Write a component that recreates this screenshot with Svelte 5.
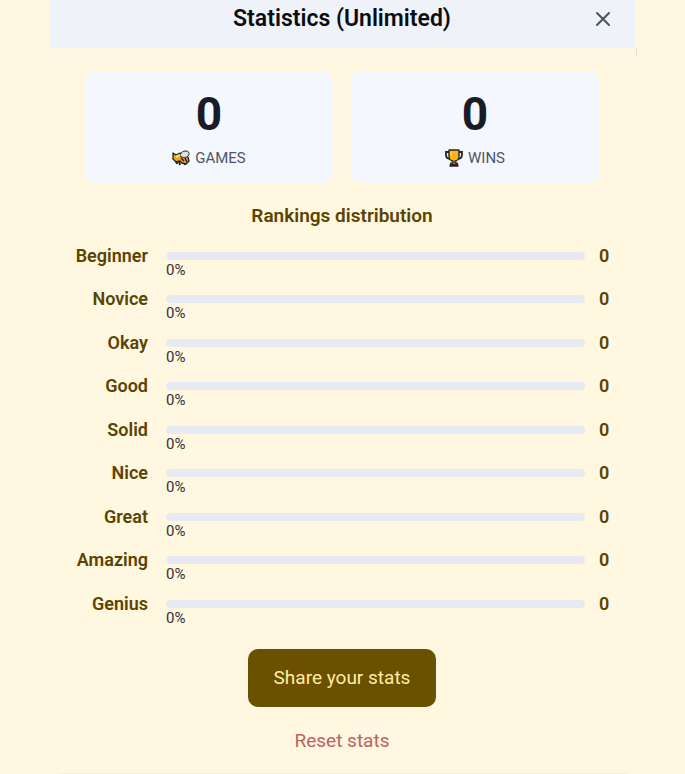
<script lang="ts">
	let games = $state(0);
	let wins = $state(0);
	let open = $state(true);

	const names = ['Beginner', 'Novice', 'Okay', 'Good', 'Solid', 'Nice', 'Great', 'Amazing', 'Genius'];
	let rankings = $state(names.map((name) => ({ name, count: 0 })));

	const total = $derived(rankings.reduce((sum, r) => sum + r.count, 0));

	function percent(count: number) {
		return total === 0 ? 0 : Math.round((count / total) * 100);
	}

	function reset() {
		games = 0;
		wins = 0;
		rankings = names.map((name) => ({ name, count: 0 }));
	}

	function share() {
		navigator.clipboard?.writeText(`Games: ${games}, wins: ${wins}`);
	}
</script>

{#if open}
	<main class="dialog">
		<header>
			<h1>Statistics (Unlimited)</h1>
			<button type="button" class="close" aria-label="Close" onclick={() => (open = false)}>
				<svg viewBox="0 0 16 16" width="16" height="16" aria-hidden="true">
					<path d="M2 2l12 12M14 2L2 14" />
				</svg>
			</button>
		</header>

		<div class="content">
			<section class="cards">
				<div class="card">
					<strong>{games}</strong>
					<span class="caption">
						<svg viewBox="0 0 18 16" width="18" height="16" aria-hidden="true">
							<path d="M4 9l1 5M7 11l1 4M12 11l1 4" fill="none" stroke="#222" stroke-width="2" />
							<path d="M1 3l3 2 4-2 4 2 4 2 1 4-3 3-4-1-2-2-4 1-3-3z" fill="#eda91c" stroke="#222" stroke-width="1.3" stroke-linejoin="round" />
							<path d="M8 6c0-3 3-5 6-5 3 0 4 3 2 5-2 2-5 2-8 0z" fill="#dde2e2" stroke="#222" stroke-width="1" />
							<path d="M9 8l3 3M13 8l2 4" fill="none" stroke="#222" stroke-width="1.5" />
							<path d="M4 7l4-2" stroke="#ffdc68" stroke-width="2" />
						</svg>
						GAMES
					</span>
				</div>
				<div class="card">
					<strong>{wins}</strong>
					<span class="caption">
						<svg viewBox="0 0 18 18" width="18" height="18" aria-hidden="true">
							<path d="M5 3H1v3c0 3 2 4 5 4M13 3h4v3c0 3-2 4-5 4" fill="none" stroke="#252525" stroke-width="1.8" />
							<path d="M4 1h10v6c0 3-2 5-4 5v2h2l1 3H5l1-3h2v-2c-2 0-4-2-4-5z" fill="#f9b80f" stroke="#252525" stroke-width="1.4" stroke-linejoin="round" />
							<path d="M5 15h8v2H5z" fill="#252525" />
							<path d="M6 3v4" stroke="#ffda63" stroke-width="1.2" />
						</svg>
						WINS
					</span>
				</div>
			</section>

			<h2>Rankings distribution</h2>
			<ul>
				{#each rankings as rank (rank.name)}
					<li>
						<span class="name">{rank.name}</span>
						<div class="progress">
							<div class="track">
								<div class="fill" style="width: {percent(rank.count)}%"></div>
							</div>
							<span class="percent">{percent(rank.count)}%</span>
						</div>
						<span class="count">{rank.count}</span>
					</li>
				{/each}
			</ul>

			<div class="actions">
				<button type="button" class="share" onclick={share}>Share your stats</button>
				<button type="button" class="reset" onclick={reset}>Reset stats</button>
			</div>
		</div>
	</main>
{/if}

<style>
	:global(body) {
		background: #fff7e0;
		font-family: Roboto, sans-serif;
	}
	.dialog {
		margin: 0 50px 0 49px;
		border-bottom: 1px solid #f7efd9;
		border-radius: 0 0 12px 12px;
	}
	header {
		position: relative;
		display: grid;
		grid-template-columns: 48px 1fr 48px;
		align-items: center;
		height: 48px;
		padding: 0 8px 10px;
		box-sizing: border-box;
		background: #eff3f9;
	}
	header::after {
		content: '';
		position: absolute;
		top: 100%;
		right: -2px;
		width: 1px;
		height: 8px;
		background: #e6dfcd;
	}
	h1 {
		grid-column: 2;
		margin: 0;
		color: #0c0d12;
		font-size: 23px;
		font-weight: 600;
		line-height: 28px;
		text-align: center;
	}
	button {
		border: none;
		background: transparent;
		font-family: inherit;
		cursor: pointer;
	}
	.close {
		display: flex;
		justify-content: center;
		padding: 8px;
	}
	.close path {
		fill: none;
		stroke: #4b5262;
		stroke-width: 2;
		stroke-linecap: round;
	}
	.content {
		padding: 23px 26px 20px;
	}
	.cards {
		display: grid;
		grid-template-columns: 1fr 1fr;
		gap: 18px;
		padding: 0 10px;
	}
	.card {
		display: flex;
		flex-direction: column;
		align-items: center;
		padding: 19px 0 13px;
		border-radius: 10px;
		background: #f4f7fe;
	}
	strong {
		color: #1a1b29;
		font-size: 46px;
		font-weight: 700;
		line-height: 48px;
	}
	.caption {
		display: flex;
		align-items: center;
		gap: 5px;
		margin-top: 8px;
		color: #51555f;
		font-size: 15px;
		line-height: 24px;
	}
	h2 {
		margin: 21px 0 16px;
		color: #5b4400;
		font-size: 19px;
		font-weight: 600;
		line-height: 24px;
		text-align: center;
	}
	ul {
		display: grid;
		grid-auto-rows: 1fr;
		min-height: 391px;
		margin: 0;
		padding: 0;
		list-style: none;
	}
	li {
		display: grid;
		grid-template-columns: 73px 1fr 10px;
		align-items: start;
		column-gap: 14px;
		color: #5b4400;
		font-size: 18px;
		font-weight: 600;
		line-height: 24px;
	}
	.name {
		text-align: right;
	}
	.progress {
		margin-left: 4px;
		padding-top: 8px;
	}
	.track {
		height: 8px;
		overflow: hidden;
		border-radius: 4px;
		background: #e7eaf3;
	}
	.fill {
		height: 100%;
		background: #6b5000;
	}
	.percent {
		display: block;
		color: #30323a;
		font-size: 15px;
		font-weight: 400;
		line-height: 20px;
	}
	.actions {
		display: flex;
		flex-direction: column;
		align-items: center;
		gap: 22px;
		margin-top: 14px;
	}
	.share {
		padding: 17px 26px;
		border-radius: 10px;
		background: #6b5000;
		color: #ffeda3;
		font-size: 19px;
		line-height: 24px;
	}
	.reset {
		padding: 0;
		color: #b96363;
		font-size: 19px;
		line-height: 24px;
	}
</style>
